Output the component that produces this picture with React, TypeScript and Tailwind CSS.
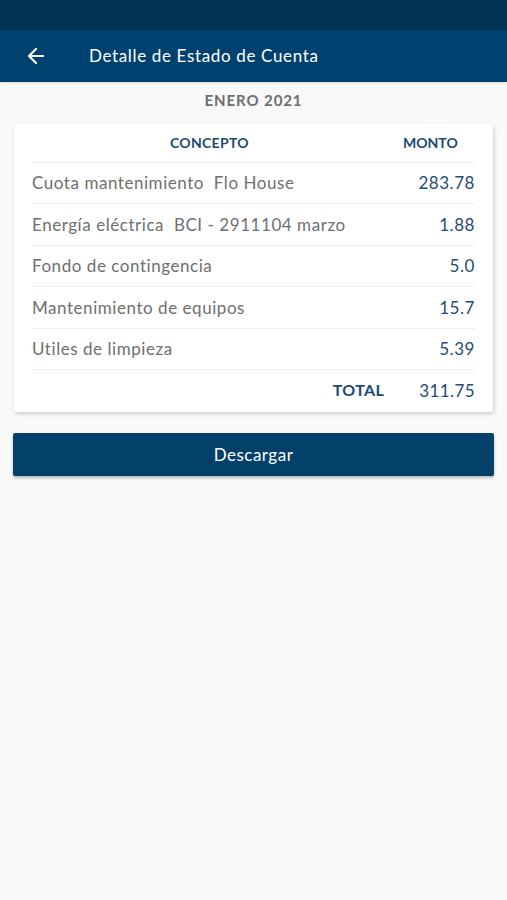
import { ArrowLeft } from "lucide-react";

const items = [
  { concept: "Cuota mantenimiento  Flo House", amount: "283.78" },
  { concept: "Energía eléctrica  BCI - 2911104 marzo", amount: "1.88" },
  { concept: "Fondo de contingencia", amount: "5.0" },
  { concept: "Mantenimiento de equipos", amount: "15.7" },
  { concept: "Utiles de limpieza", amount: "5.39" },
];

export default function App() {
  return (
    <div
      className="min-h-[900px] bg-[#f9f9f9]"
      style={{ fontFamily: "Lato, 'Open Sans', sans-serif" }}
    >
      <div className="h-[30px] bg-[#023457]" />
      <header className="flex h-[52px] items-center bg-[#00426f] shadow-sm">
        <button className="ml-[24px] flex h-[24px] w-[24px] items-center justify-center text-white">
          <ArrowLeft className="h-[24px] w-[24px]" strokeWidth={2.2} />
        </button>
        <h1 className="ml-[41px] text-[17px] tracking-[0.65px] text-white">
          Detalle de Estado de Cuenta
        </h1>
      </header>

      <p className="mt-[7px] text-center text-[15px] font-bold tracking-[0.9px] text-[#6e6e6e]">
        ENERO 2021
      </p>

      <div className="mx-[14px] mt-[12px] rounded-[2px] bg-white px-[18px] pb-[2px] shadow-[1px_2px_4px_rgba(0,0,0,0.18)]">
        <div className="flex h-[38px] items-center text-[14px] font-bold text-[#1a4a73]">
          <span className="flex-1 pl-[138px] text-left tracking-[0.3px]">CONCEPTO</span>
          <span className="w-[90px] pl-[18px] text-left">MONTO</span>
        </div>
        {items.map((item) => (
          <div
            key={item.concept}
            className="flex h-[41.6px] items-center border-t border-[#eeeeee] text-[17px] tracking-[0.55px]"
          >
            <span className="flex-1 whitespace-pre text-[#6f6f6f]">
              {item.concept}
            </span>
            <span className="text-[#1f4b75]">{item.amount}</span>
          </div>
        ))}
        <div className="flex h-[41px] items-center border-t border-[#eeeeee] tracking-[0.4px]">
          <span className="flex-1 pr-[35px] text-right text-[16px] font-bold text-[#1a4a73]">
            TOTAL
          </span>
          <span className="text-[17px] text-[#1f4b75]">311.75</span>
        </div>
      </div>

      <div className="mx-[13px] mt-[21px]">
        <button className="h-[43px] w-full rounded-[2px] bg-[#03416b] text-[17px] tracking-[0.5px] text-white shadow-[0_2px_3px_rgba(0,0,0,0.25)]">
          Descargar
        </button>
      </div>
    </div>
  );
}
